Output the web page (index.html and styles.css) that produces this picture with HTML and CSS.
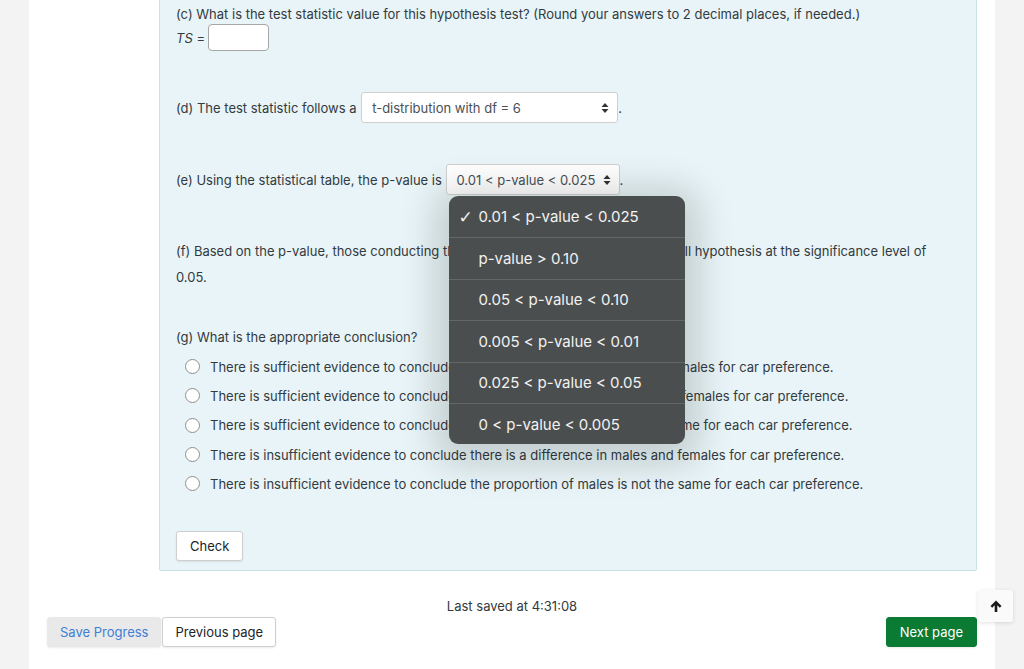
FILE: index.html
```html
<!DOCTYPE html>
<html>
<head>
<meta charset="utf-8">
<link rel="stylesheet" href="styles.css">
</head>
<body>
<div class="page">
  <div class="panel">
    <p class="line">(c) What is the test statistic value for this hypothesis test? (Round your answers to 2 decimal places, if needed.)</p>
    <div class="ts-row"><span class="ts">TS</span>&nbsp;=&nbsp;<span class="input"></span></div>

    <div class="sel-row row-d">(d) The test statistic follows a&nbsp;<span class="select sel-d"><span class="sel-text">t-distribution with df = 6</span><svg class="caret" width="8" height="12" viewBox="0 0 8 12"><path d="M4 1 L7.5 5 H0.5 Z M4 11 L7.5 7 H0.5 Z" fill="#333"/></svg></span>.</div>

    <div class="sel-row row-e">(e) Using the statistical table, the p-value is&nbsp;<span class="select sel-e"><span class="sel-text">0.01 &lt; p-value &lt; 0.025</span><svg class="caret" width="8" height="12" viewBox="0 0 8 12"><path d="M4 1 L7.5 5 H0.5 Z M4 11 L7.5 7 H0.5 Z" fill="#333"/></svg>
      <span class="menu">
        <span class="opt"><span class="check">✓</span>0.01 &lt; p-value &lt; 0.025</span>
        <span class="opt">p-value &gt; 0.10</span>
        <span class="opt">0.05 &lt; p-value &lt; 0.10</span>
        <span class="opt">0.005 &lt; p-value &lt; 0.01</span>
        <span class="opt">0.025 &lt; p-value &lt; 0.05</span>
        <span class="opt">0 &lt; p-value &lt; 0.005</span>
      </span>
    </span>.</div>

    <p class="para-f">(f) Based on the p-value, those conducting the hypothesis test should reject the null hypothesis at the significance level of 0.05.</p>

    <p class="line q-g">(g) What is the appropriate conclusion?</p>
    <ul class="radios">
      <li><span class="radio"></span>There is sufficient evidence to conclude there is a difference in males and females for car preference.</li>
      <li><span class="radio"></span>There is sufficient evidence to conclude there is an association in males and females for car preference.</li>
      <li><span class="radio"></span>There is sufficient evidence to conclude the proportion of males is not the same for each car preference.</li>
      <li><span class="radio"></span>There is insufficient evidence to conclude there is a difference in males and females for car preference.</li>
      <li><span class="radio"></span>There is insufficient evidence to conclude the proportion of males is not the same for each car preference.</li>
    </ul>
    <button class="btn check-btn">Check</button>
  </div>

  <div class="saved">Last saved at 4:31:08</div>
  <div class="footer">
    <div class="left-btns">
      <button class="btn save-btn">Save Progress</button>
      <button class="btn prev-btn">Previous page</button>
    </div>
    <button class="btn next-btn">Next page</button>
  </div>
</div>
<button class="to-top"><svg width="14" height="14" viewBox="0 0 14 14"><path d="M7 1.5 L12.5 7 L10.8 8.7 L8.3 6.2 V13 H5.7 V6.2 L3.2 8.7 L1.5 7 Z" fill="#1a1a1a"/></svg></button>
</body>
</html>
```

FILE: styles.css
```css
* { box-sizing: border-box; }
html, body { margin: 0; padding: 0; height: 100%; overflow: hidden; }
body {
  background: #f3f3f3;
  font-family: Inter, "Noto Sans", sans-serif;
  font-size: 13px;
  color: #333a40;
}
.page {
  display: flow-root;
  margin-left: 29px;
  width: 966px;
  min-height: 100%;
  background: #fff;
  padding: 0 18px;
}
.panel {
  margin-left: 112px;
  margin-top: -10px;
  border: 1px solid #c8e1e8;
  border-radius: 2px;
  background: #e8f4f7;
  padding: 13px 17px 9px 16px;
}
.line { margin: 0; line-height: 20px; }
.ts-row { display: flex; align-items: center; height: 27px; }
.ts { font-style: italic; }
.input {
  display: inline-block;
  width: 61px; height: 27px;
  background: #fff;
  border: 1px solid #a6a6a6;
  border-radius: 4px;
  margin-left: -1px;
}
.sel-row { display: flex; align-items: center; height: 31px; }
.row-d { margin-top: 41px; }
.row-e { margin-top: 41px; }
.select {
  position: relative;
  display: inline-flex;
  align-items: center;
  justify-content: space-between;
  height: 31px;
  background: #fff;
  border: 1px solid #d0d0d0;
  border-radius: 3px;
  padding: 0 8px 0 10px;
  color: #495057;
}
.sel-d { width: 257px; margin-left: 1px; }
.sel-e { width: 174px; }
.caret { display: block; }
.menu {
  position: absolute;
  top: 31px;
  left: 2px;
  width: 236px;
  background: #4b4e4e;
  border-radius: 9px;
  box-shadow: 0 6px 36px 14px rgba(0,0,0,0.16);
  display: flex;
  flex-direction: column;
  z-index: 5;
  overflow: hidden;
}
.opt {
  position: relative;
  height: 41.4px;
  display: flex;
  align-items: center;
  padding-left: 30px;
  color: #f2f2f2;
  font-size: 15px;
  border-top: 1px solid #636666;
}
.opt:first-child { border-top: none; }
.check { position: absolute; left: 10px; font-size: 17px; font-weight: 700; font-family: "DejaVu Sans", sans-serif; }
.para-f { margin: 43px 0 0; line-height: 26px; padding-right: 30px; }
.q-g { margin-top: 34px; line-height: 26px; }
.radios { list-style: none; margin: 2px 0 0; padding: 0 0 0 9px; }
.radios li { display: flex; align-items: center; height: 29.3px; }
.radio {
  width: 15px; height: 15px;
  border: 1.5px solid #8f8f8f;
  border-radius: 50%;
  background: #fff;
  margin-right: 10px;
  flex: none;
}
.btn {
  font-family: inherit;
  font-size: 13px;
  color: #212529;
  background: #fff;
  border: 1px solid #cfcfcf;
  border-radius: 3px;
  height: 30px;
  padding: 0 13px;
  white-space: nowrap;
  box-shadow: 0 1px 2px rgba(0,0,0,0.08);
  cursor: pointer;
}
.check-btn { margin-top: 33px; }
.saved { text-align: center; margin-top: 26px; line-height: 18px; color: #333a40; }
.footer {
  display: flex;
  justify-content: space-between;
  align-items: center;
  margin-top: 2px;
}
.left-btns { display: flex; gap: 1px; }
.save-btn {
  background: #e9e9e9;
  border-color: #e9e9e9;
  color: #3f7fd6;
  padding: 0 12px;
}
.prev-btn { padding: 0 12px; }
.next-btn {
  background: #0b7a33;
  border-color: #0b7a33;
  color: #fff;
}
.to-top {
  position: fixed;
  left: 978px;
  top: 590px;
  width: 35px;
  height: 32px;
  background: #fafafa;
  border: none;
  border-radius: 3px;
  box-shadow: 0 1px 4px rgba(0,0,0,0.12);
  display: flex;
  align-items: center;
  justify-content: center;
  padding: 0;
}
```
